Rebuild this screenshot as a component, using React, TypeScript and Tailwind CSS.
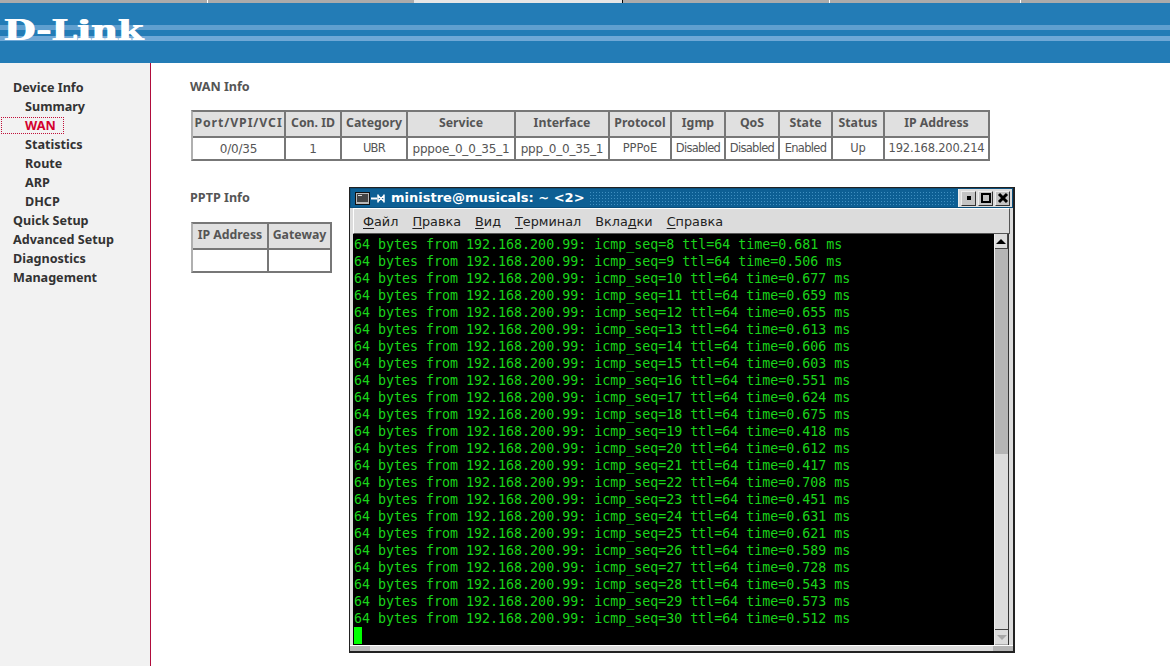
const nav: [string, number, boolean?][] = [
  ['Device Info', 0],
  ['Summary', 1],
  ['WAN', 1, true],
  ['Statistics', 1],
  ['Route', 1],
  ['ARP', 1],
  ['DHCP', 1],
  ['Quick Setup', 0],
  ['Advanced Setup', 0],
  ['Diagnostics', 0],
  ['Management', 0],
];

const widths = [91, 56, 66, 108, 94, 62, 54, 54, 53, 52, 105];
const heads = ['Port/VPI/VCI', 'Con. ID', 'Category', 'Service', 'Interface', 'Protocol', 'Igmp', 'QoS', 'State', 'Status', 'IP Address'];
const NUM = 'text-[12px] tracking-[-0.2px]';
const IP = 'text-[11.5px] tracking-[-0.2px]';
const PLAIN = 'text-[11.5px]';
const NARROW = 'text-[11.5px] tracking-[-0.7px]';
const cells: [string, string][] = [
  ['0/0/35', NUM], ['1', NUM], ['UBR', NARROW], ['pppoe_0_0_35_1', NUM], ['ppp_0_0_35_1', NUM], ['PPPoE', PLAIN],
  ['Disabled', NARROW], ['Disabled', NARROW], ['Enabled', NARROW], ['Up', PLAIN], ['192.168.200.214', IP],
];
const seqs: [number, string][] = [
  [8, '0.681'], [9, '0.506'], [10, '0.677'], [11, '0.659'], [12, '0.655'], [13, '0.613'], [14, '0.606'], [15, '0.603'],
  [16, '0.551'], [17, '0.624'], [18, '0.675'], [19, '0.418'], [20, '0.612'], [21, '0.417'], [22, '0.708'], [23, '0.451'],
  [24, '0.631'], [25, '0.621'], [26, '0.589'], [27, '0.728'], [28, '0.543'], [29, '0.573'], [30, '0.512'],
];
const menu: [string, string, string][] = [
  ['', 'Ф', 'айл'], ['', 'П', 'равка'], ['', 'В', 'ид'], ['', 'Т', 'ерминал'], ['Вкла', 'д', 'ки'], ['', 'С', 'правка'],
];

function Table({ w, hs, rows, cols }: { w: number; hs: string[]; rows: [string, string][]; cols: number[] }) {
  return (
    <div className="border-t-2 border-r-2 border-b-2 border-[#777777] border-l-2 border-l-[#b0b0b0]" style={{ width: w }}>
      <div className="flex h-[24px] bg-[#e0e0e0]">
        {hs.map((h, i) => (
          <div key={h} className={`flex items-center justify-center pb-[2px] font-['Noto_Sans',sans-serif] font-bold text-[#555555] text-[12.3px] whitespace-nowrap ${i ? 'border-l-2 border-[#777777]' : ''} ${h === 'Port/VPI/VCI' ? 'tracking-[0.9px]' : ''}`} style={{ width: cols[i] }}>{h}</div>
        ))}
      </div>
      <div className="flex h-[23px] bg-white border-t-2 border-[#777777]">
        {rows.map(([c, cls], i) => (
          <div key={i} className={`flex items-center justify-center font-['DejaVu_Sans',sans-serif] text-[#555555] whitespace-nowrap ${cls} ${i ? 'border-l-2 border-[#777777]' : ''}`} style={{ width: cols[i] }}>{c}</div>
        ))}
      </div>
    </div>
  );
}

function Dither() {
  return <div className="flex-1 h-[15px] mx-1 bg-[radial-gradient(#3f8fc0_0.6px,transparent_0.7px)] bg-[length:3px_3px]" />;
}

function WinBtn({ children }: { children: React.ReactNode }) {
  return (
    <div className="w-[15px] h-[15px] bg-[#c4c4c4] border border-[#eeeeee] border-r-[#333333] border-b-[#333333] flex items-center justify-center">
      {children}
    </div>
  );
}

function Terminal() {
  return (
    <div className="absolute left-[349px] top-[187px] w-[666px] h-[466px] bg-[#dcdcdc] border border-[#222222] border-r-2 border-b-2 flex flex-col font-['DejaVu_Sans',sans-serif]">
      <div className="h-[20px] bg-[#0d5f94] flex items-center pl-[4px] border border-[#0a4f7c]">
        <svg width="15" height="13" viewBox="0 0 15 13" className="shrink-0">
          <rect x="0.5" y="0.5" width="14" height="12" fill="#b8b8b8" stroke="#111" />
          <rect x="2" y="2" width="11" height="8" fill="#444" />
          <rect x="3" y="3" width="4" height="1" fill="#ddd" />
        </svg>
        <svg width="15" height="11" viewBox="0 0 15 11" className="shrink-0 ml-[1px]">
          <path d="M0 5.5H6" stroke="#fff" strokeWidth="2" />
          <path d="M7 1.5V9.5M13 1.5V9.5M7 2.5L13 8.5M13 2.5L7 8.5" stroke="#fff" strokeWidth="1.5" fill="none" />
        </svg>
        <span className="ml-[5px] text-white font-bold text-[13px] whitespace-nowrap">ministre@musicals: ~ &lt;2&gt;</span>
        <Dither />
        <div className="flex gap-[2px] h-full items-center bg-[#dcdcdc] pl-[2px] pr-[2px] border-l border-[#eeeeee]">
          <WinBtn><div className="w-[4px] h-[4px] bg-black" /></WinBtn>
          <WinBtn><div className="w-[10px] h-[10px] border-2 border-black" /></WinBtn>
          <WinBtn>
            <svg width="12" height="12" viewBox="0 0 12 12"><path d="M2 2L10 10M10 2L2 10" stroke="#000" strokeWidth="3" /></svg>
          </WinBtn>
        </div>
      </div>
      <div className="h-[26px] mx-[3px] bg-[#dcdcdc] border-t border-l border-white border-b border-r border-b-[#555555] border-r-[#555555] flex items-center gap-[14px] pl-[9px] pt-[2px] text-[12.8px] text-[#222222] shrink-0">
        {menu.map(([a, u, b]) => (
          <span key={u + b} className="whitespace-nowrap">{a}<span className="underline underline-offset-2">{u}</span>{b}</span>
        ))}
      </div>
      <div className="flex flex-1 mx-[3px] min-h-0">
        <div className="flex-1 bg-black pl-[1px] pt-[2px] font-['DejaVu_Sans_Mono',monospace] text-[13.3px] leading-[17px] text-[#1ad41a] whitespace-pre overflow-hidden">
          {seqs.map(([s, t]) => (
            <div key={s} className="h-[17px]">{`64 bytes from 192.168.200.99: icmp_seq=${s} ttl=64 time=${t} ms`}</div>
          ))}
          <div className="w-[8px] h-[17px] bg-[#00ff00]" />
        </div>
        <div className="w-[15px] flex flex-col bg-[#dcdcdc] border-l border-[#eeeeee] border-r border-r-[#333333]">
          <div className="h-[15px] bg-[#dcdcdc] border-b border-r border-[#444444] flex items-center justify-center">
            <div className="w-0 h-0 border-x-[5px] border-x-transparent border-b-[5px] border-b-black" />
          </div>
          <div className="h-[205px] bg-[#b5b5b5]" />
          <div className="flex-1 bg-[#dcdcdc] border-b border-[#444444]" />
          <div className="h-[15px] flex items-center justify-center bg-[#dcdcdc] border-b border-[#aaaaaa]">
            <div className="w-0 h-0 border-x-[5px] border-x-transparent border-t-[5px] border-t-[#a8a8a8]" />
          </div>
        </div>
        <div className="w-[1px]" />
      </div>
      <div className="h-[6px] flex bg-[#dcdcdc] border-t border-white shrink-0">
        <div className="w-[20px] bg-[#b5b5b5]" />
        <div className="flex-1" />
        <div className="w-[20px] bg-[#b5b5b5]" />
      </div>
    </div>
  );
}

export default function App() {
  return (
    <div className="relative w-[1170px] h-[666px] overflow-hidden bg-white font-['Noto_Sans',sans-serif]">
      <div className="flex h-[3px] bg-[#ababab]">
        <div className="w-[207px]" />
        <div className="w-[1px] bg-white" />
        <div className="w-[206px]" />
        <div className="w-[208px] bg-[#e6e6e6]" />
        <div className="w-[1px] bg-black" />
        <div className="w-[206px]" />
        <div className="w-[1px] bg-white" />
        <div className="w-[190px]" />
        <div className="w-[1px] bg-white" />
      </div>
      <div className="relative h-[60px] bg-[#237cb6]">
        <div className="flex flex-col gap-[6px] pt-[22px]">
          <div className="h-[5px] bg-[#5f9fcf]" />
          <div className="h-[5px] bg-[#6fa8d6]" />
        </div>
        <div className="absolute left-[3px] top-[13px] origin-left scale-x-[1.36] text-white font-['DejaVu_Serif',serif] font-bold text-[27px] leading-[30px] whitespace-nowrap [text-shadow:1px_0_0_#fff]">D-Link</div>
      </div>
      <div className="flex h-[603px]">
        <div className="w-[151px] bg-[#f2f2f2] border-r border-[#b00c3c] pt-[16px] shrink-0">
          {nav.map(([n, lvl, active]) => (
            <div key={n} className={`relative h-[19px] flex items-center font-bold text-[12.6px] whitespace-nowrap ${lvl ? 'pl-[25px]' : 'pl-[13px]'} ${active ? 'text-[#d4002e]' : 'text-[#333333]'}`}>
              {active && <div className="absolute left-[1px] top-[0px] w-[63px] h-[17px] border border-dotted border-[#c0103a]" />}
              {n}
            </div>
          ))}
        </div>
        <div className="pl-[39px] pt-[16px]">
          <div className="font-bold text-[12.6px] text-[#555555] leading-[16px]">WAN Info</div>
          <div className="mt-[15px] ml-[1px]">
            <Table w={799} hs={heads} rows={cells} cols={widths} />
          </div>
          <div className="font-bold text-[12.6px] text-[#555555] leading-[16px] mt-[29px]">PPTP Info</div>
          <div className="mt-[16px] ml-[1px]">
            <Table w={141} hs={['IP Address', 'Gateway']} rows={[['', PLAIN], ['', PLAIN]]} cols={[74, 63]} />
          </div>
        </div>
      </div>
      <Terminal />
    </div>
  );
}
